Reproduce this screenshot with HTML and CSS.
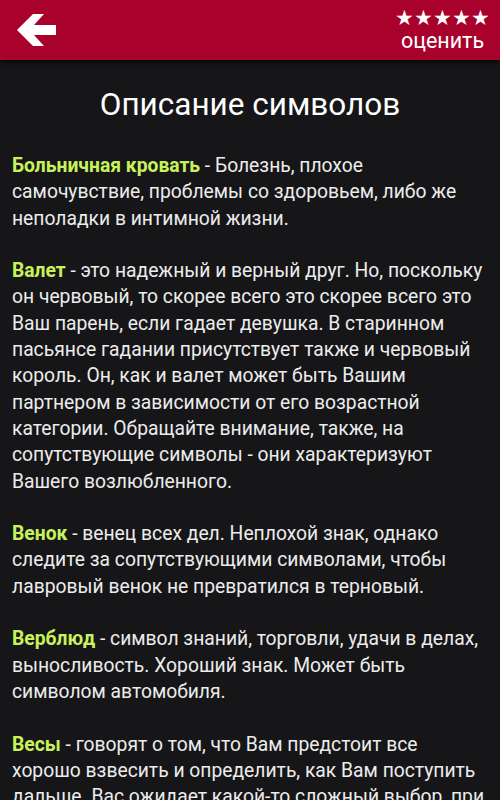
FILE: index.html
```html
<!DOCTYPE html>
<html lang="ru">
<head>
<meta charset="UTF-8">
<meta name="viewport" content="width=device-width, initial-scale=1.0">
<title>Описание символов</title>
<link rel="stylesheet" href="styles.css">
</head>
<body>
<header class="topbar">
    <a class="back" href="#">
        <svg width="60" height="60" viewBox="0 0 60 60">
            <polygon points="17,30 33,14 44,14 34,25 56,25 56,35 34,35 44,46 33,46" fill="#fff"/>
        </svg>
    </a>
    <div class="rate">
        <div class="stars">★★★★★</div>
        <div class="rate-label">оценить</div>
    </div>
</header>
<main class="content">
    <h1>Описание символов</h1>
    <p><b>Больничная кровать</b> - Болезнь, плохое<br>самочувствие, проблемы со здоровьем, либо же<br>неполадки в интимной жизни.</p>
    <p><b>Валет</b> - это надежный и верный друг. Но, поскольку<br>он червовый, то скорее всего это скорее всего это<br>Ваш парень, если гадает девушка. В старинном<br>пасьянсе гадании присутствует также и червовый<br>король. Он, как и валет может быть Вашим<br>партнером в зависимости от его возрастной<br>категории. Обращайте внимание, также, на<br>сопутствующие символы - они характеризуют<br>Вашего возлюбленного.</p>
    <p><b>Венок</b> - венец всех дел. Неплохой знак, однако<br>следите за сопутствующими символами, чтобы<br>лавровый венок не превратился в терновый.</p>
    <p><b>Верблюд</b> - символ знаний, торговли, удачи в делах,<br>выносливость. Хороший знак. Может быть<br>символом автомобиля.</p>
    <p><b>Весы</b> - говорят о том, что Вам предстоит все<br>хорошо взвесить и определить, как Вам поступить<br>дальше. Вас ожидает какой-то сложный выбор, при<br>котором нужно будет проявить рассудительность.</p>
</main>
</body>
</html>
```

FILE: styles.css
```css
html, body {
    height: 100%;
}
body {
    margin: 0;
    background-color: #161618;
    color: #ececec;
    font-family: Roboto, "Noto Sans", sans-serif;
    overflow: hidden;
}
.topbar {
    position: relative;
    height: 60px;
    display: flex;
    align-items: center;
    justify-content: space-between;
    background-color: #a8022c;
    box-shadow: 0 2px 4px rgba(0, 0, 0, 0.8);
}
.back {
    display: block;
    width: 60px;
    height: 60px;
}
.back svg {
    display: block;
}
.rate {
    display: flex;
    flex-direction: column;
    align-items: center;
    padding-right: 10px;
    color: #fff;
}
.stars {
    font-size: 20.5px;
    line-height: 22px;
}
.rate-label {
    font-size: 21.5px;
    line-height: 24px;
}
.content {
    padding: 0 0 0 12px;
}
h1 {
    margin: 27px 0 30px;
    font-size: 31.5px;
    line-height: 36px;
    font-weight: 400;
    text-align: center;
    color: #fff;
    padding-right: 12px;
}
p {
    margin: 0 0 26.3px;
    font-size: 19.3px;
    line-height: 26.3px;
    white-space: nowrap;
}
p b {
    color: #c8f25c;
    font-weight: 700;
}
```
